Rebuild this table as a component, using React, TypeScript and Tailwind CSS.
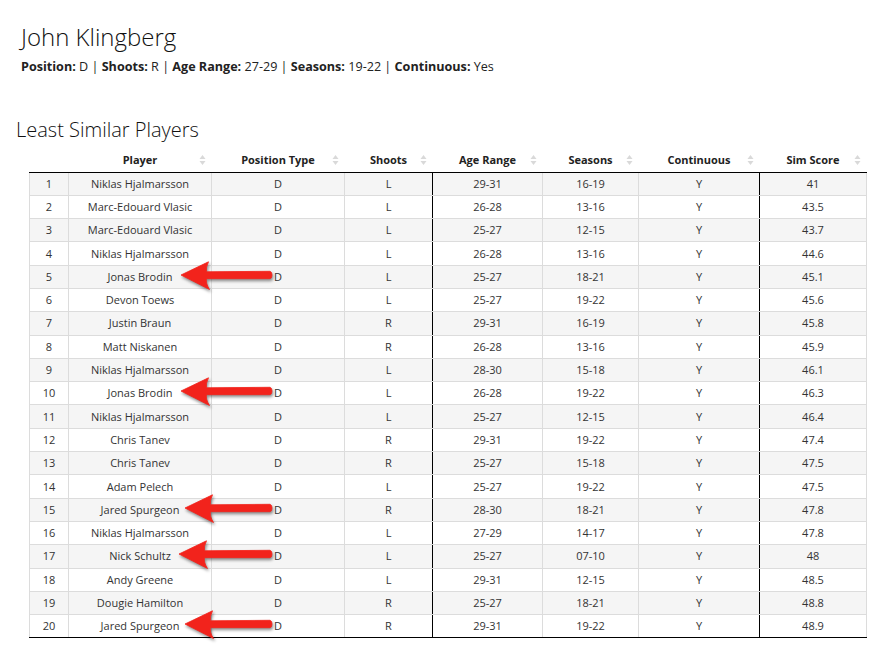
import React from "react";

type Row = [number, string, string, string, string, string, string, string];

const rows: Row[] = [
  [1, "Niklas Hjalmarsson", "D", "L", "29-31", "16-19", "Y", "41"],
  [2, "Marc-Edouard Vlasic", "D", "L", "26-28", "13-16", "Y", "43.5"],
  [3, "Marc-Edouard Vlasic", "D", "L", "25-27", "12-15", "Y", "43.7"],
  [4, "Niklas Hjalmarsson", "D", "L", "26-28", "13-16", "Y", "44.6"],
  [5, "Jonas Brodin", "D", "L", "25-27", "18-21", "Y", "45.1"],
  [6, "Devon Toews", "D", "L", "25-27", "19-22", "Y", "45.6"],
  [7, "Justin Braun", "D", "R", "29-31", "16-19", "Y", "45.8"],
  [8, "Matt Niskanen", "D", "R", "26-28", "13-16", "Y", "45.9"],
  [9, "Niklas Hjalmarsson", "D", "L", "28-30", "15-18", "Y", "46.1"],
  [10, "Jonas Brodin", "D", "L", "26-28", "19-22", "Y", "46.3"],
  [11, "Niklas Hjalmarsson", "D", "L", "25-27", "12-15", "Y", "46.4"],
  [12, "Chris Tanev", "D", "R", "29-31", "19-22", "Y", "47.4"],
  [13, "Chris Tanev", "D", "R", "25-27", "15-18", "Y", "47.5"],
  [14, "Adam Pelech", "D", "L", "25-27", "19-22", "Y", "47.5"],
  [15, "Jared Spurgeon", "D", "R", "28-30", "18-21", "Y", "47.8"],
  [16, "Niklas Hjalmarsson", "D", "L", "27-29", "14-17", "Y", "47.8"],
  [17, "Nick Schultz", "D", "L", "25-27", "07-10", "Y", "48"],
  [18, "Andy Greene", "D", "L", "29-31", "12-15", "Y", "48.5"],
  [19, "Dougie Hamilton", "D", "R", "25-27", "18-21", "Y", "48.8"],
  [20, "Jared Spurgeon", "D", "R", "29-31", "19-22", "Y", "48.9"],
];

// x (page) of arrow tip for marked rows
const arrows: Record<number, number> = { 5: 179, 10: 179, 15: 183, 17: 177, 20: 183 };

const headers = [
  "",
  "Player",
  "Position Type",
  "Shoots",
  "Age Range",
  "Seasons",
  "Continuous",
  "Sim Score",
];
const widths = [39, 143, 133, 88, 110, 96, 121, 107];

function SortIcon() {
  return (
    <svg width="7" height="11" viewBox="0 0 7 11" className="absolute right-[6px] top-1/2 -translate-y-1/2">
      <path d="M3.5 0.5 L6.5 4.5 L0.5 4.5 Z" fill="#d9d9d9" />
      <path d="M3.5 10.5 L6.5 6.5 L0.5 6.5 Z" fill="#d9d9d9" />
    </svg>
  );
}

function Arrow({ tipX }: { tipX: number }) {
  const tail = 271;
  const W = tail - tipX;
  const left = tipX - 68;
  const d = `M1,14 L28.5,0.8 Q25.5,7 26.5,10.8 L${W - 2},10.3 Q${W},10.8 ${W},14 Q${W},17.2 ${W - 2},17.7 L26.5,17.7 Q25.5,22 29.5,28.5 Z`;
  return (
    <svg
      width={W + 6}
      height={34}
      viewBox={`0 0 ${W + 6} 34`}
      className="absolute z-10 pointer-events-none"
      style={{ left, top: -5, filter: "drop-shadow(1px 2px 1.5px rgba(0,0,0,0.45))" }}
    >
      <path d={d} fill="#f2231c" stroke="#f2231c" strokeWidth="0.8" strokeLinejoin="round" />
    </svg>
  );
}

export default function App() {
  return (
    <div
      className="w-[896px] h-[650px] bg-white text-[#333]"
      style={{ fontFamily: '"Open Sans", "Liberation Sans", sans-serif' }}
    >
      <div className="pl-[21px] pt-[21px]">
        <h1 className="text-[24px] font-light leading-[32px] text-[#111]">John Klingberg</h1>
        <p className="text-[12.6px] leading-[18px] mt-[5px] text-[#222]">
          <b>Position:</b> D | <b>Shoots:</b> R | <b>Age Range:</b> 27-29 | <b>Seasons:</b> 19-22 |{" "}
          <b>Continuous:</b> Yes
        </p>
      </div>
      <h2 className="pl-[16px] mt-[42px] text-[20px] font-light leading-[24px] text-[#111]">
        Least Similar Players
      </h2>
      <div className="pl-[29px] mt-[6px]">
        <table className="table-fixed border-collapse text-[11px] w-[837px]">
          <colgroup>
            {widths.map((w, i) => (
              <col key={i} style={{ width: w }} />
            ))}
          </colgroup>
          <thead>
            <tr>
              {headers.map((h, i) => (
                <th
                  key={i}
                  className="relative h-[24px] p-0 font-bold text-[#222] text-center border-b border-b-black"
                >
                  {h}
                  {i > 0 && <SortIcon />}
                </th>
              ))}
            </tr>
          </thead>
          <tbody>
            {rows.map((r, ri) => (
              <tr key={ri} className={ri % 2 === 0 ? "bg-[#f5f5f5]" : "bg-white"}>
                {r.map((c, ci) => (
                  <td
                    key={ci}
                    className={
                      "h-[23.3px] p-0 text-center leading-[14px] border-b border-[#dcdcdc] " +
                      (ci === 0 ? "border-l border-l-[#dcdcdc] " : "") +
                      (ci === 3 || ci === 6
                        ? "border-r border-r-black "
                        : "border-r border-r-[#dcdcdc] ") +
                      (ci === 1 ? "relative " : "") +
                      (ri === rows.length - 1 ? "border-b-black" : "")
                    }
                  >
                    {c}
                    {ci === 1 && arrows[r[0]] !== undefined && <Arrow tipX={arrows[r[0]]} />}
                  </td>
                ))}
              </tr>
            ))}
          </tbody>
        </table>
      </div>
    </div>
  );
}
